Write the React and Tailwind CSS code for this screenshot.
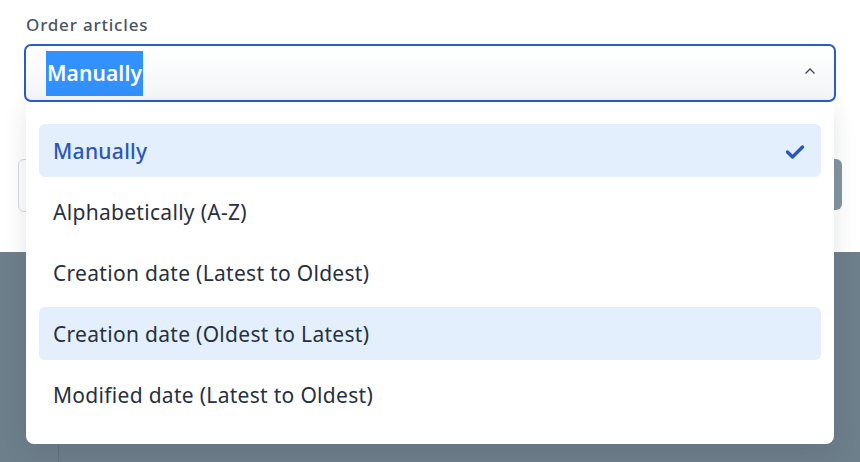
import React from "react";

const options = [
  "Manually",
  "Alphabetically (A-Z)",
  "Creation date (Latest to Oldest)",
  "Creation date (Oldest to Latest)",
  "Modified date (Latest to Oldest)",
];

export default function App() {
  return (
    <div
      className="relative w-[860px] h-[462px] overflow-hidden bg-white"
      style={{ fontFamily: '"Noto Sans", "Open Sans", sans-serif' }}
    >
      {/* page content behind */}
      <div className="h-[252px] bg-white">
        <div className="px-[26px] pt-[12px] text-[17px] leading-[25px] tracking-[0.8px] text-[#4a5563] font-medium">
          Order articles
        </div>
        <div className="mt-[7px] mx-[24px] h-[58px] rounded-[7px] border-2 border-[#2b5cc6] bg-gradient-to-b from-white to-[#f3f5f8] flex items-center justify-between pl-[20px] pr-[18px]">
          <span className="bg-[#3390ff] text-white text-[21px] font-semibold leading-[45px] h-[45px] px-[1px] tracking-[0.1px]">
            Manually
          </span>
          <svg width="12" height="8" viewBox="0 0 12 8" className="mt-[-4px]">
            <path d="M1.5 6.5 L6 2 L10.5 6.5" fill="none" stroke="#3c4654" strokeWidth="1.3" />
          </svg>
        </div>
        <div className="mt-[57px] flex justify-between px-[18px]">
          <div className="w-[120px] h-[53px] rounded-[6px] border border-[#d4d9df] bg-white" />
          <div className="w-[120px] h-[51px] rounded-[6px] bg-[#8495a2]" />
        </div>
      </div>
      <div className="h-[210px] bg-[#6e7f8c] flex">
        <div className="w-[59px] border-r border-[#65757f]" />
      </div>

      {/* dropdown menu */}
      <div className="absolute left-[26px] top-[102px] w-[808px] h-[342px] bg-white rounded-b-[8px] shadow-[0_8px_24px_rgba(30,40,60,0.12)] px-[13px] pt-[22px] flex flex-col gap-[8px]">
        {options.map((o, i) => {
          const selected = i === 0;
          const hover = i === 3;
          return (
            <div
              key={o}
              className={
                "h-[53px] shrink-0 rounded-[6px] flex items-center justify-between pl-[14px] pr-[16px] text-[21px] tracking-[0.3px] pt-[2px] " +
                (selected
                  ? "bg-[#e3effc] text-[#2b55bd] font-medium"
                  : hover
                  ? "bg-[#e3effc] text-[#27303d]"
                  : "text-[#27303d]")
              }
            >
              <span>{o}</span>
              {selected && (
                <svg width="20" height="16" viewBox="0 0 20 16">
                  <path d="M2.5 8 L7.5 13 L17.5 3" fill="none" stroke="#2b55bd" strokeWidth="3.4" strokeLinecap="round" strokeLinejoin="round" />
                </svg>
              )}
            </div>
          );
        })}
      </div>
    </div>
  );
}
